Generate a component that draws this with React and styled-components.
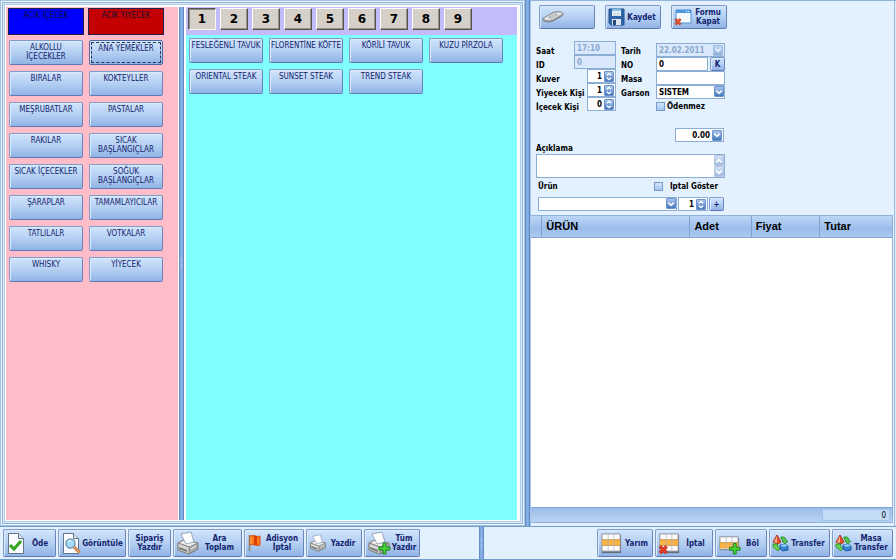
import React from "react";
import styled, { createGlobalStyle, css } from "styled-components";

const categories = [
  "ALKOLLU İÇECEKLER",
  "ANA YEMEKLER",
  "BIRALAR",
  "KOKTEYLLER",
  "MEŞRUBATLAR",
  "PASTALAR",
  "RAKILAR",
  "SICAK BAŞLANGIÇLAR",
  "SICAK İÇECEKLER",
  "SOĞUK BAŞLANGIÇLAR",
  "ŞARAPLAR",
  "TAMAMLAYICILAR",
  "TATLILALR",
  "VOTKALAR",
  "WHISKY",
  "YİYECEK",
];

const products = [
  "FESLEĞENLİ TAVUK",
  "FLORENTİNE KÖFTE",
  "KÖRİLİ TAVUK",
  "KUZU PİRZOLA",
  "ORIENTAL STEAK",
  "SUNSET STEAK",
  "TREND STEAK",
];

const pages = [1, 2, 3, 4, 5, 6, 7, 8, 9];

function App() {
  return (
    <PageStyled>
      <GlobalStyle />
      <Workspace>
        <MenuFrame>
          <CategoryPane>
            <OpenItems>
              <OpenButton $color="#0000ff">ACIK İÇECEK</OpenButton>
              <OpenButton $color="#c40000">ACIK YIYECEK</OpenButton>
            </OpenItems>
            <TileGrid>
              {categories.map((name) => (
                <Tile key={name} $focused={name === "ANA YEMEKLER"}>
                  {name}
                </Tile>
              ))}
            </TileGrid>
          </CategoryPane>
          <Splitter>
            <Grip />
          </Splitter>
          <ProductPane>
            <PageBar>
              {pages.map((page) => (
                <PageButton key={page} $pressed={page === 1}>
                  {page}
                </PageButton>
              ))}
            </PageBar>
            <ProductGrid>
              {products.map((name) => (
                <Tile key={name} $oneLine>
                  {name}
                </Tile>
              ))}
            </ProductGrid>
          </ProductPane>
        </MenuFrame>
        <Splitter />
        <OrderPane>
          <OrderForm />
          <OrderTable />
        </OrderPane>
      </Workspace>
      <ActionBar />
    </PageStyled>
  );
}

function OrderForm() {
  return (
    <FormStyled onSubmit={(e) => e.preventDefault()}>
      <FormButtons>
        <ToolButton $width="56px" aria-label="Sil">
          <EraserIcon />
        </ToolButton>
        <ToolButton $width="56px">
          <SaveIcon />
          <span>Kaydet</span>
        </ToolButton>
        <ToolButton $width="56px">
          <CloseFormIcon />
          <span>Formu Kapat</span>
        </ToolButton>
      </FormButtons>
      <Fields>
        <LabelColumn>
          <label htmlFor="saat">Saat</label>
          <label htmlFor="id">ID</label>
          <label htmlFor="kuver">Kuver</label>
          <label htmlFor="yiyecek">Yiyecek Kişi</label>
          <label htmlFor="icecek">İçecek Kişi</label>
        </LabelColumn>
        <LeftInputs>
          <TextInput id="saat" defaultValue="17:10" disabled />
          <TextInput id="id" defaultValue="0" disabled />
          <Spinner id="kuver" value="1" />
          <Spinner id="yiyecek" value="1" />
          <Spinner id="icecek" value="0" />
        </LeftInputs>
        <LabelColumn>
          <label htmlFor="tarih">Tarih</label>
          <label htmlFor="no">NO</label>
          <label htmlFor="masa">Masa</label>
          <label htmlFor="garson">Garson</label>
        </LabelColumn>
        <RightInputs>
          <FieldBox $disabled>
            <BareInput id="tarih" defaultValue="22.02.2011" disabled />
            <DropButton disabled aria-label="Takvim">
              <ChevronIcon />
            </DropButton>
          </FieldBox>
          <NumberRow>
            <TextInput id="no" defaultValue="0" />
            <SquareButton>K</SquareButton>
          </NumberRow>
          <TextInput id="masa" />
          <Dropdown id="garson" options={["SİSTEM"]} />
          <CheckLabel>
            <CheckBox type="checkbox" />
            Ödenmez
          </CheckLabel>
        </RightInputs>
      </Fields>
      <AmountBox>
        <BareInput $right defaultValue="0.00" aria-label="Tutar" />
        <DropButton aria-label="Hesap makinesi">
          <ChevronIcon />
        </DropButton>
      </AmountBox>
      <label htmlFor="aciklama">Açıklama</label>
      <NoteBox>
        <NoteArea id="aciklama" />
        <NoteScroll>
          <DropButton disabled aria-label="Yukarı">
            <ChevronIcon up />
          </DropButton>
          <DropButton disabled aria-label="Aşağı">
            <ChevronIcon />
          </DropButton>
        </NoteScroll>
      </NoteBox>
      <ProductLabels>
        <label htmlFor="urun">Ürün</label>
        <CheckLabel $gap="7px">
          <CheckBox type="checkbox" />
          Iptal Göster
        </CheckLabel>
      </ProductLabels>
      <ProductRow>
        <Dropdown id="urun" options={[""]} />
        <Spinner id="miktar" value="1" label="Miktar" />
        <SquareButton>+</SquareButton>
      </ProductRow>
    </FormStyled>
  );
}

function OrderTable() {
  return (
    <TableArea>
      <TableStyled>
        <colgroup>
          <Col $width="3%" />
          <col />
          <Col $width="17%" />
          <Col $width="19%" />
          <Col $width="20%" />
        </colgroup>
        <thead>
          <tr>
            <th />
            <th>ÜRÜN</th>
            <th>Adet</th>
            <th>Fiyat</th>
            <th>Tutar</th>
          </tr>
        </thead>
      </TableStyled>
      <TableFooter>
        <TotalBox>0</TotalBox>
      </TableFooter>
    </TableArea>
  );
}

function ActionBar() {
  return (
    <BarStyled>
      <BarGroup $grow>
        <ToolButton $width="53px">
          <PageIcon kind="check" />
          <span>Öde</span>
        </ToolButton>
        <ToolButton $width="68px">
          <PageIcon kind="search" />
          <span>Görüntüle</span>
        </ToolButton>
        <ToolButton $width="43px">
          <span>Sipariş Yazdır</span>
        </ToolButton>
        <ToolButton $width="69px">
          <PrinterIcon />
          <span>Ara Toplam</span>
        </ToolButton>
        <ToolButton $width="60px">
          <FlagIcon />
          <span>Adisyon İptal</span>
        </ToolButton>
        <ToolButton $width="56px">
          <PrinterIcon size={18} />
          <span>Yazdir</span>
        </ToolButton>
        <ToolButton $width="56px">
          <PrinterIcon plus />
          <span>Tüm Yazdır</span>
        </ToolButton>
      </BarGroup>
      <Splitter>
        <Grip />
      </Splitter>
      <BarGroup $end>
        <ToolButton $width="56px">
          <GridIcon />
          <span>Yarım</span>
        </ToolButton>
        <ToolButton $width="58px">
          <GridIcon kind="cross" />
          <span>İptal</span>
        </ToolButton>
        <ToolButton $width="52px">
          <SplitGridIcon />
          <span>Böl</span>
        </ToolButton>
        <ToolButton $width="61px">
          <TransferIcon />
          <span>Transfer</span>
        </ToolButton>
        <ToolButton $width="61px">
          <TransferIcon />
          <span>Masa Transfer</span>
        </ToolButton>
      </BarGroup>
    </BarStyled>
  );
}

function Spinner({ id, value, label }) {
  return (
    <FieldBox>
      <BareInput $right id={id} defaultValue={value} aria-label={label} />
      <DropButton aria-label="Artır veya azalt">
        <svg width="9" height="11" viewBox="0 0 9 11" fill="none">
          <path d="M0 5.5h9" stroke="#7fa3d6" />
          <path
            d="M2 4l2.5-2L7 4M2 7l2.5 2L7 7"
            stroke="#fff"
            strokeWidth="1.5"
          />
        </svg>
      </DropButton>
    </FieldBox>
  );
}

function Dropdown({ id, options }) {
  return (
    <SelectBox>
      <select id={id}>
        {options.map((option) => (
          <option key={option}>{option}</option>
        ))}
      </select>
      <SelectArrow>
        <ChevronIcon />
      </SelectArrow>
    </SelectBox>
  );
}

/* icons */

function ChevronIcon({ up }) {
  return (
    <svg width="9" height="8" viewBox="0 0 9 8" fill="none">
      <path
        d={up ? "M1.5 5.5l3-3 3 3" : "M1.5 2.5l3 3 3-3"}
        stroke="#fff"
        strokeWidth="1.8"
      />
    </svg>
  );
}

function EraserIcon() {
  return (
    <svg width="22" height="14" viewBox="0 0 22 14">
      <path
        d="M1 8.5L11 2.5Q15 1 20 2.5Q22 4 20 6L11 11Q7 13 2 11Q0 10 1 8.5z"
        fill="#a9aaac"
        stroke="#77797d"
      />
      <path
        d="M2 8l9-5q4-1.5 8.5-.5 1.5 1 0 2L10.5 9.5q-3 1.5-7.500.5-2-.8-1-2z"
        fill="#eeeeed"
        stroke="#929498"
        strokeWidth=".7"
      />
      <path
        d="M6 7.5l5.5-3q2.5-1 4.5 0l-6 3.3q-2 1-4-.3z"
        fill="#c9cacb"
        stroke="#999"
        strokeWidth=".6"
      />
    </svg>
  );
}

function SaveIcon() {
  return (
    <svg width="17" height="18" viewBox="0 0 17 18">
      <path d="M1 1h15v16H3l-2-2z" fill="#2d65a8" stroke="#24558e" />
      <path d="M4 1h9v7H4z" fill="#eef6fc" />
      <path d="M4 1h9v2H4z" fill="#82bce8" />
      <path d="M5 5h7M5 7h7" stroke="#a7bdcf" strokeWidth=".7" />
      <path d="M4 11h9v6H4z" fill="#dfe8ef" />
      <path d="M5 12h3v5H5z" fill="#264b77" />
    </svg>
  );
}

function CloseFormIcon() {
  return (
    <svg width="18" height="17" viewBox="0 0 18 17">
      <path d="M2 1h15v13H2z" fill="#f5faff" stroke="#4e91d1" />
      <path d="M2 1h15v3H2z" fill="#4e9ae0" />
      <path d="M12 2.5h1M14 2.5h1" stroke="#fff" />
      <path
        d="M1.5 10l5 5.5m0-5.5l-5 5.5"
        stroke="#b52b15"
        strokeWidth="2.6"
      />
      <path
        d="M1.5 10l5 5.5m0-5.5l-5 5.5"
        stroke="#f15a36"
        strokeWidth="1.3"
      />
    </svg>
  );
}

function PageIcon({ kind }) {
  return (
    <svg width="21" height="23" viewBox="0 0 21 23" fill="none">
      <path d="M2.5 1.5h10l5 5v15h-15z" fill="#fafcff" stroke="#63758d" />
      <path d="M12.5 1.5v5h5" fill="#dbe5f0" stroke="#63758d" />
      {kind === "check" ? (
        <path d="M4 13l4 4 7-8" stroke="#35a51f" strokeWidth="3" />
      ) : (
        <>
          <circle
            cx="9.5"
            cy="11.5"
            r="4.5"
            fill="#a5dcfa"
            stroke="#7298b8"
            strokeWidth="1.5"
          />
          <path d="M7 10q1-2 3-1.5" stroke="#fff" />
          <path d="M13 15l5.5 5.5" stroke="#c8753b" strokeWidth="3" />
          <path d="M13 15l5 5" stroke="#f8b170" />
        </>
      )}
    </svg>
  );
}

function PrinterIcon({ size = 24, plus }) {
  return (
    <svg width={size} height={size} viewBox="0 0 24 24" strokeLinejoin="round">
      <path d="M2 12l6-3 14 3v6l-9 5-11-4z" fill="#aaa" stroke="#777" />
      <path d="M2 12l6-3 14 3-9 4z" fill="#efefed" stroke="#8b8b88" />
      <path d="M2 12l11 4v7L2 19z" fill="#d5d5d2" stroke="#858582" />
      <path
        d="M5 3l10-2 3 10-8 2z"
        fill="#fff"
        stroke="#8495aa"
        strokeWidth=".8"
      />
      <path d="M3 16l8 3v2l-8-3z" fill="#737577" />
      <path d="M15 18l5-3" stroke="#eee" />
      {plus && <PlusMark />}
    </svg>
  );
}

function PlusMark() {
  return (
    <path
      d="M16 12h3v4h4v3h-4v4h-3v-4h-4v-3h4z"
      fill="#43d532"
      stroke="#247e25"
    />
  );
}

function FlagIcon() {
  return (
    <svg width="16" height="20" viewBox="0 0 16 20">
      <path d="M2.5 2v16" stroke="#858477" strokeWidth="1.5" />
      <path
        d="M3 3q3-1 5 0t5 0v9q-2 1-5 0t-5 0z"
        fill="#ff771e"
        stroke="#d84e10"
      />
      <path d="M7 2.5v9q2 .5 3 1v-9q-1-1-3-1z" fill="#dd3e09" />
      <path d="M4 4v7" stroke="#ffbc56" />
    </svg>
  );
}

function GridIcon({ kind }) {
  return (
    <svg width="23" height="23" viewBox="0 0 24 24">
      <path d="M2 3h20v19H2z" fill="#666b78" />
      <path d="M2 2h19v18H2z" fill="#fffefd" stroke="#8b8fa0" />
      <path d="M2 8h19v6H2z" fill="#f8b343" />
      <path d="M2 8h19M2 14h19" stroke="#bd8a44" strokeWidth=".8" />
      <path d="M8.5 2v18M14.5 2v18" stroke="#aeb3c2" strokeWidth=".8" />
      {kind === "cross" && (
        <>
          <path d="M2 15l7 7m0-7l-7 7" stroke="#a91b10" strokeWidth="3.5" />
          <path d="M2 15l7 7m0-7l-7 7" stroke="#f04429" strokeWidth="2" />
        </>
      )}
    </svg>
  );
}

function SplitGridIcon() {
  return (
    <svg width="23" height="23" viewBox="0 0 24 24">
      <path d="M2 6h20v13H2z" fill="#666b78" />
      <path d="M2 5h19v13H2z" fill="#fffefd" stroke="#8b8fa0" />
      <path d="M2 11h19v6H2z" fill="#f8b343" />
      <path d="M2 11h19" stroke="#bd8a44" strokeWidth=".8" />
      <path d="M8.5 5v13M14.5 5v13" stroke="#aeb3c2" strokeWidth=".8" />
      <PlusMark />
    </svg>
  );
}

function TransferIcon() {
  return (
    <svg width="17" height="18" viewBox="0 0 17 18" strokeLinejoin="round">
      <path d="M5 1l4 7-3 2-5-2z" fill="#ed4c28" stroke="#a83625" />
      <path d="M5 2v7L2 8z" fill="#ffad80" />
      <path
        d="M9 3q5-1 5 4h2l-3 3-3-3h1q0-2-2-2z"
        fill="#54ca45"
        stroke="#258630"
        strokeWidth=".8"
      />
      <path
        d="M1 10h5l-1 2 3 2-2 3-5-4z"
        fill="#65d44c"
        stroke="#258630"
        strokeWidth=".8"
      />
      <path d="M8 11l5-1 3 2v4l-5 1-3-2z" fill="#3682d0" stroke="#235ba4" />
      <path d="M8 11l5-1 3 2-5 1z" fill="#8cc9f5" />
    </svg>
  );
}

/* styles */

const GlobalStyle = createGlobalStyle`
  * {
    box-sizing: border-box;
  }
  body {
    margin: 0;
    font-family: "DejaVu Sans Condensed", "DejaVu Sans", sans-serif;
    font-size: 8px;
    line-height: 9px;
    color: #000;
  }
  button, input, select, textarea {
    margin: 0;
    padding: 0;
    font: inherit;
    color: inherit;
    border-radius: 0;
  }
`;

const glossy = css`
  border: 1px solid #7f9cc8;
  border-bottom-color: #6278b4;
  border-right-color: #6b83ba;
  border-radius: 2px;
  background: linear-gradient(#d0e4fb, #b8d2f4 45%, #90b4e5);
  box-shadow: inset 1px 1px 0 #dcebfc;
  color: #14246e;
`;

const PageStyled = styled.main`
  display: flex;
  flex-direction: column;
  height: 100vh;
  overflow: hidden;
  background: #e3f0fe;
`;

const Workspace = styled.div`
  display: flex;
  flex: 1;
  min-height: 0;
`;

const MenuFrame = styled.section`
  display: flex;
  flex: 1;
  min-width: 0;
  padding: 7px 8px 6px 6px;
  background: #fff;
  box-shadow: inset 0 0 0 1px #a0c1e0, inset 0 0 0 2px #eff7ff,
    inset 0 0 0 3px #8fb4d8, inset 0 0 0 4px #d8e9fb, inset 0 0 0 5px #b4cde8;
`;

const CategoryPane = styled.div`
  width: 172px;
  margin-right: 1px;
  padding: 1px 2px;
  background: #ffbdca;
`;

const Splitter = styled.div`
  display: flex;
  align-items: center;
  justify-content: center;
  flex: none;
  width: 5px;
  background: linear-gradient(90deg, #5581bd, #8db5e8 40%, #7ea8df 70%, #4f7bb8);
`;

const Grip = styled.span`
  height: 11px;
  border-left: 1px dotted #c1dbfb;
`;

const OpenItems = styled.div`
  display: grid;
  grid-template-columns: repeat(2, 76px);
  column-gap: 4px;
  padding-bottom: 5px;
`;

const OpenButton = styled.button`
  display: flex;
  justify-content: center;
  height: 27px;
  padding-top: 2px;
  border: 1px solid #22224f;
  background: ${(p) => p.$color};
  color: #101033;
`;

const TileGrid = styled.div`
  display: grid;
  grid-template-columns: repeat(auto-fill, 74px);
  grid-auto-rows: 25px;
  gap: 6px;
  padding-left: 1px;
`;

const Tile = styled.button`
  ${glossy}
  display: flex;
  justify-content: center;
  align-items: flex-start;
  padding-top: 2px;
  text-align: center;
  white-space: ${(p) => (p.$oneLine ? "nowrap" : "normal")};
  ${(p) =>
    p.$focused &&
    css`
      padding-top: 3px;
      border-color: #4c67a5;
      outline: 1px dashed #23345f;
      outline-offset: -3px;
    `}
`;

const ProductPane = styled.div`
  flex: 1;
  min-width: 0;
  margin-left: 2px;
  background: #80ffff;
`;

const PageBar = styled.nav`
  display: flex;
  gap: 4px;
  height: 28px;
  padding: 1px 2px;
  background: #c2bcfa;
`;

const PageButton = styled.button`
  width: 28px;
  height: 22px;
  border: 1px solid;
  border-color: ${(p) =>
    p.$pressed
      ? "#55534f #f7f5ef #f7f5ef #55534f"
      : "#fff #55534f #55534f #fff"};
  background: #d5d1c8;
  box-shadow: ${(p) =>
    p.$pressed ? "inset 1px 1px 0 #8b8880" : "inset -1px -1px 0 #96928a"};
  font-family: "DejaVu Sans", sans-serif;
  font-size: 12px;
  font-weight: bold;
  line-height: 14px;
`;

const ProductGrid = styled(TileGrid)`
  padding: 3px 3px 0;
`;

const OrderPane = styled.section`
  display: flex;
  flex-direction: column;
  width: 366px;
  padding: 2px 3px 3px 0;
  border-left: 1px solid #a8c7e7;
  box-shadow: inset 0 1px 0 #8fb4d8, inset -1px 0 0 #dcebfb,
    inset -2px 0 0 #9bbce0;
`;

const FormStyled = styled.form`
  display: flex;
  flex-direction: column;
  align-items: flex-start;
  width: 195px;
  padding: 3px 0 0 5px;
  font-weight: bold;
`;

const FormButtons = styled.div`
  display: flex;
  gap: 10px;
  height: 24px;
  padding-left: 3px;
`;

const ToolButton = styled.button`
  ${glossy}
  display: flex;
  align-items: center;
  width: ${(p) => p.$width};
  padding: 0 2px;
  font-weight: bold;

  svg {
    flex: none;
  }

  span {
    flex: 1;
    text-align: center;
  }
`;

const Fields = styled.div`
  display: grid;
  grid-template-columns: 38px 42px 30px 69px;
  padding-top: 12px;

  > :nth-child(3) {
    margin-left: 5px;
  }

  > :nth-child(4) {
    margin-left: 10px;
  }
`;

const LabelColumn = styled.div`
  display: grid;
  grid-auto-rows: 14px;
  align-items: center;
  padding-top: 3px;
  white-space: nowrap;
`;

const LeftInputs = styled.div`
  display: grid;
  grid-auto-rows: 14px;

  > :nth-child(n + 3) {
    margin-left: 13px;
  }
`;

const RightInputs = styled.div`
  display: grid;
  grid-auto-rows: 14px;
  width: 69px;
  padding-top: 2px;
`;

const TextInput = styled.input`
  width: 100%;
  min-width: 0;
  height: 14px;
  padding: 0 2px;
  border: 1px solid #8caed4;
  background: #fff;

  &:disabled {
    background: #d9e8fa;
    color: #8aa8cf;
  }
`;

const FieldBox = styled.div`
  display: flex;
  align-items: center;
  min-width: 0;
  height: 14px;
  padding-right: 1px;
  border: 1px solid #8caed4;
  background: ${(p) => (p.$disabled ? "#d9e8fa" : "#fff")};
`;

const BareInput = styled.input`
  flex: 1;
  width: 100%;
  min-width: 0;
  height: 12px;
  padding: 0 2px;
  border: 0;
  background: transparent;
  text-align: ${(p) => (p.$right ? "right" : "left")};

  &:disabled {
    color: #8aa8cf;
  }
`;

const arrowFace = css`
  display: flex;
  align-items: center;
  justify-content: center;
  width: 10px;
  height: 11px;
  border: 1px solid #6d91c8;
  border-radius: 1px;
  background: linear-gradient(#a8c7ef, #4377bd);
`;

const DropButton = styled.button`
  ${arrowFace}
  flex: none;

  &:disabled {
    opacity: 0.5;
  }
`;

const NumberRow = styled.div`
  display: flex;
  gap: 2px;
`;

const SquareButton = styled.button`
  ${glossy}
  flex: none;
  width: 15px;
  height: 14px;
`;

const SelectBox = styled.div`
  position: relative;
  height: 14px;

  select {
    display: block;
    width: 100%;
    height: 14px;
    padding: 0 12px 0 2px;
    border: 1px solid #8caed4;
    background: #fff;
    appearance: none;
  }
`;

const SelectArrow = styled.span`
  ${arrowFace}
  position: absolute;
  top: 1px;
  right: 1px;
  pointer-events: none;
`;

const CheckLabel = styled.label`
  display: flex;
  align-items: center;
  gap: ${(p) => p.$gap || "2px"};
  white-space: nowrap;
`;

const CheckBox = styled.input`
  flex: none;
  width: 9px;
  height: 9px;
  border: 1px solid #7599cb;
  background: linear-gradient(#d3e5fb, #a4c3ed);
  appearance: none;
`;

const AmountBox = styled(FieldBox)`
  width: 49px;
  margin: 14px 0 2px 139px;
`;

const NoteBox = styled.div`
  display: flex;
  width: 189px;
  height: 24px;
  margin-top: 1px;
  border: 1px solid #8caed4;
  background: #fff;
`;

const NoteArea = styled.textarea`
  flex: 1;
  border: 0;
  background: transparent;
  resize: none;
`;

const NoteScroll = styled.div`
  display: flex;
  flex-direction: column;
`;

const ProductLabels = styled.div`
  display: flex;
  align-items: center;
  justify-content: space-between;
  width: 182px;
  height: 16px;
  padding-left: 2px;
`;

const ProductRow = styled.div`
  display: grid;
  grid-template-columns: 139px 30px 15px;
  column-gap: 1px;
  padding: 3px 0 4px 2px;
`;

const TableArea = styled.div`
  display: flex;
  flex-direction: column;
  flex: 1;
  min-height: 0;
  border: 1px solid #8fb1da;
  border-left: 0;
  background: #fff;
`;

const Col = styled.col`
  width: ${(p) => p.$width};
`;

const TableStyled = styled.table`
  width: 100%;
  border-collapse: collapse;
  table-layout: fixed;
  font-family: "Liberation Sans", Arial, sans-serif;
  font-size: 11px;
  line-height: 12px;

  th {
    height: 21px;
    padding: 0 4px;
    border-right: 1px solid #7fa4d4;
    border-bottom: 1px solid #84a6d1;
    background: linear-gradient(#bdd6f6, #9bbdea 60%, #aac9f1);
    text-align: left;
  }

  th:last-child {
    border-right: 0;
  }
`;

const TableFooter = styled.div`
  display: flex;
  justify-content: flex-end;
  height: 15px;
  margin-top: auto;
  padding: 1px 2px;
  border-top: 1px solid #7fa4d4;
  background: linear-gradient(#9cbde9, #b9d3f4);
`;

const TotalBox = styled.output`
  width: 68px;
  padding: 1px 3px;
  border: 1px solid #a3c3ea;
  background: #c4dbf7;
  text-align: right;
`;

const BarStyled = styled.footer`
  display: flex;
  height: 34px;
  border-top: 1px solid #719dcb;
  border-bottom: 1px solid #719dcb;
`;

const BarGroup = styled.div`
  display: flex;
  flex: ${(p) => (p.$grow ? "479 1 0" : "412 1 0")};
  justify-content: ${(p) => (p.$end ? "flex-end" : "flex-start")};
  gap: 2px;
  min-width: 0;
  padding: 2px 3px;
`;

export default App;
